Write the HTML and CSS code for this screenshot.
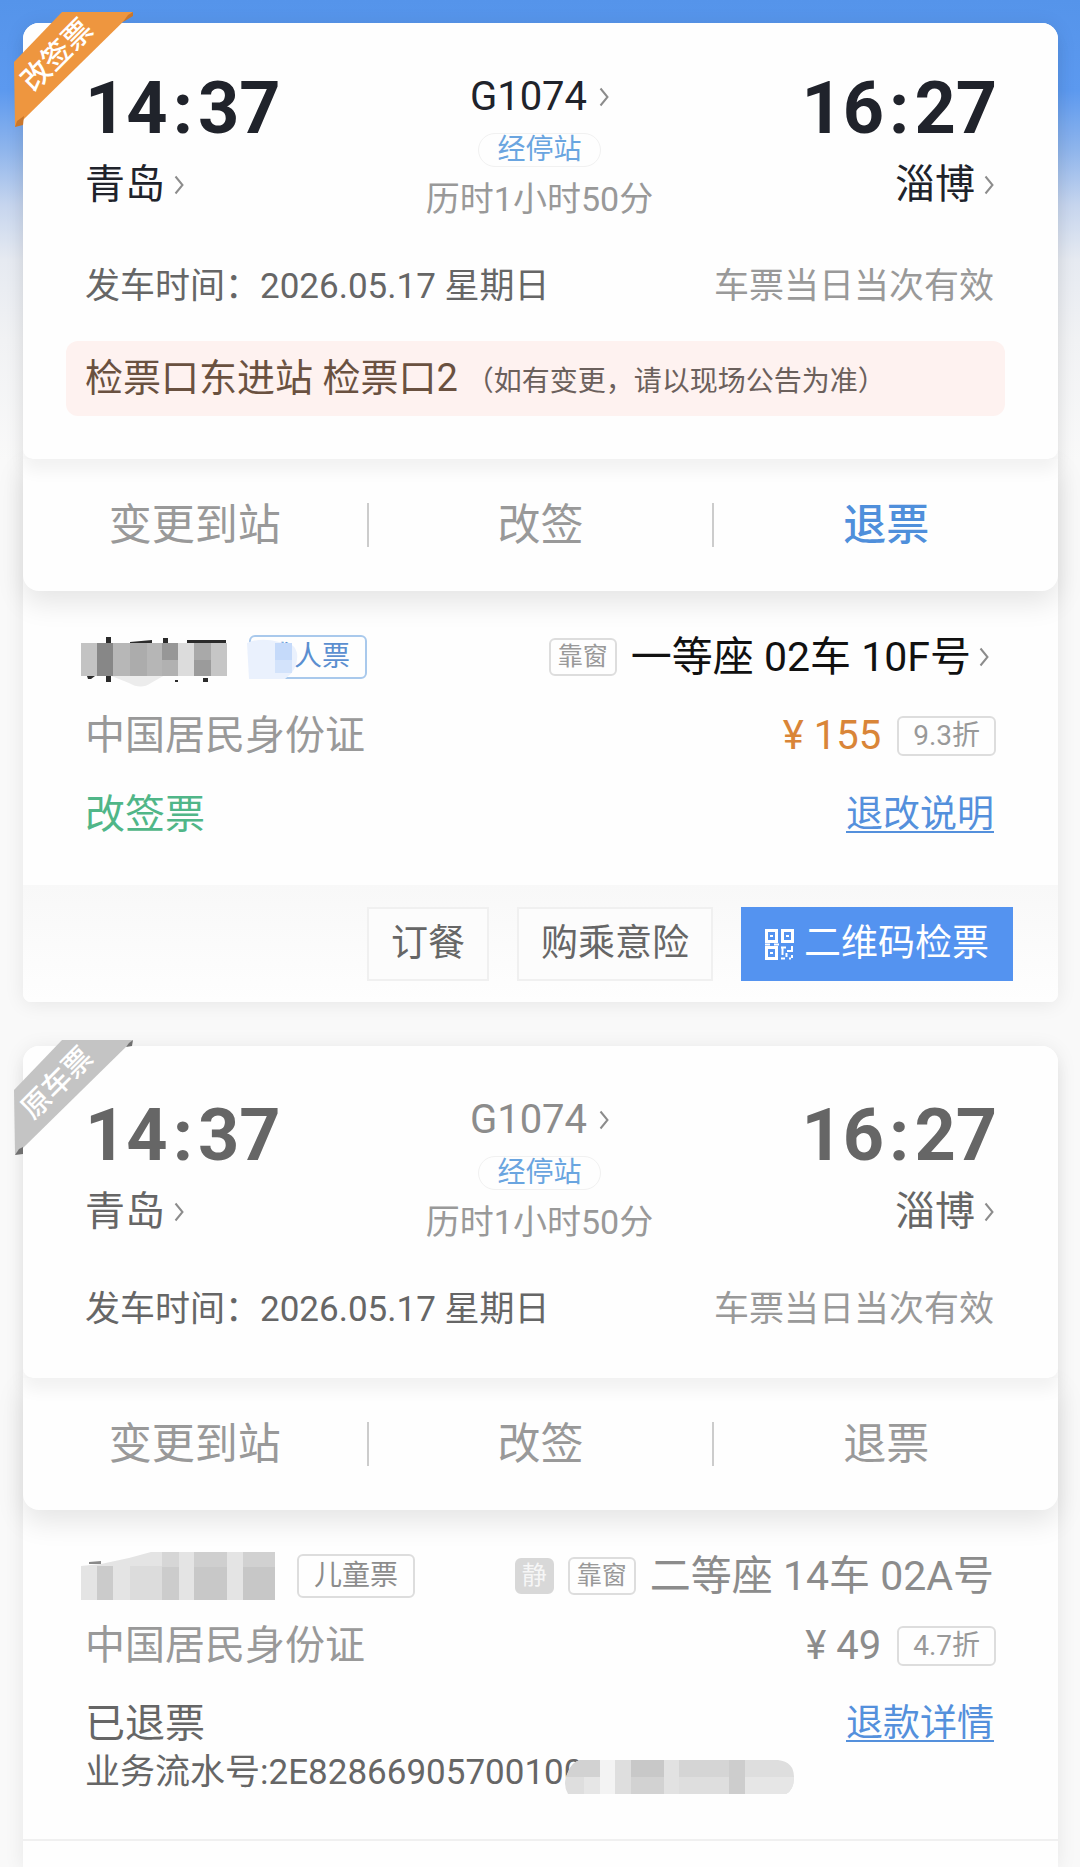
FILE: index.html
```html
<!DOCTYPE html>
<html lang="zh-CN">
<head>
    <meta charset="UTF-8">
    <meta name="viewport" content="width=device-width, initial-scale=1.0">
    <title>车票详情</title>
    <link rel="stylesheet" href="styles.css">
</head>
<body>
    <svg class="defs" aria-hidden="true">
        <symbol id="chevron" viewBox="0 0 10 20">
            <path d="M1.5 1.5 L8.5 10 L1.5 18.5" fill="none" stroke="currentColor" stroke-width="2"/>
        </symbol>
    </svg>

    <main class="page">
        <!-- Rebooked ticket -->
        <article class="card">
            <svg class="ribbon" viewBox="0 0 120 116">
                <polygon points="48,0 119,0 10,107 1,115 0,50" fill="#ee963f"/>
                <polygon points="119,0 119,4 109,10 114,3" fill="#c9772c"/>
                <polygon points="1,115 9,113 10,104 3,109" fill="#c9772c"/>
                <text class="ribbon-text" transform="translate(43 43) rotate(-45)" fill="#ffffff">改签票</text>
            </svg>

            <section class="trip">
                <div class="route">
                    <div class="stop">
                        <div class="time">14<span class="colon">:</span>37</div>
                        <button type="button" class="station">青岛<svg class="chevron"><use href="#chevron"/></svg></button>
                    </div>
                    <div class="train">
                        <button type="button" class="train-no">G1074<svg class="chevron"><use href="#chevron"/></svg></button>
                        <button type="button" class="stops-btn">经停站</button>
                        <div class="duration">历时1小时50分</div>
                    </div>
                    <div class="stop stop-end">
                        <div class="time">16<span class="colon">:</span>27</div>
                        <button type="button" class="station">淄博<svg class="chevron"><use href="#chevron"/></svg></button>
                    </div>
                </div>
                <div class="depart">
                    <span class="depart-date">发车时间：2026.05.17 星期日</span>
                    <span class="depart-valid">车票当日当次有效</span>
                </div>
                <p class="notice">检票口东进站 检票口2<small>（如有变更，请以现场公告为准）</small></p>
            </section>

            <nav class="actions">
                <button type="button" class="action">变更到站</button>
                <button type="button" class="action">改签</button>
                <button type="button" class="action action-on">退票</button>
            </nav>

            <section class="passenger">
                <div class="row">
                    <div class="who">
                        <svg class="mosaic mosaic-name" width="146" height="40" viewBox="0 0 146 40">
                            <path d="M28 38 H84 L70 46 Q60 53 48 46 Z" fill="#ececec"/>
                            <path d="M25 0h5v6h-5z M49 5l22-2v3H49z M82 1h5v5h-5z M106 3h39v3h-39z M6 39h8l-4 3h-3z M25 39h5v6h-5z M122 41h5v4h-5z M94 43h3v2h-3z" fill="#2b2b2b"/>
                            <rect x="0" y="6" width="16" height="33" fill="#c3c3c3"/>
                            <rect x="16" y="6" width="16" height="33" fill="#878787"/>
                            <rect x="32" y="6" width="17" height="33" fill="#b7b7b7"/>
                            <rect x="49" y="6" width="17" height="33" fill="#acacac"/>
                            <rect x="66" y="6" width="15" height="33" fill="#b6b6b6"/>
                            <rect x="81" y="6" width="16" height="17" fill="#979797"/>
                            <rect x="81" y="23" width="16" height="16" fill="#b1b1b1"/>
                            <rect x="97" y="6" width="16" height="33" fill="#dcdcdc"/>
                            <rect x="113" y="6" width="17" height="17" fill="#a9a9a9"/>
                            <rect x="130" y="6" width="16" height="33" fill="#c6c6c6"/>
                            <rect x="113" y="23" width="17" height="16" fill="#9b9b9b"/>
                        </svg>
                        <span class="tag tag-type tag-blue">成人票
                            <svg class="mosaic mosaic-type" width="50" height="46" viewBox="0 0 50 46">
                                <path d="M0 10 Q14 4 32 9 L42 11 Q48 12 50 20 Q52 36 38 46 L2 46 Z" fill="#eaf1fd"/>
                                <rect x="28" y="10" width="17" height="17" fill="#c5dafa"/>
                                <rect x="28" y="27" width="17" height="13" fill="#d3e3fb"/>
                            </svg>
                        </span>
                    </div>
                    <button type="button" class="seat">
                        <span class="tag tag-seat">靠窗</span>
                        <span>一等座 02车 10F号</span>
                        <svg class="chevron chevron-seat"><use href="#chevron"/></svg>
                    </button>
                </div>
                <div class="row">
                    <span class="id-type">中国居民身份证</span>
                    <div class="fare">
                        <span class="price">¥ 155</span>
                        <span class="tag tag-off">9.3折</span>
                    </div>
                </div>
                <div class="row">
                    <span class="status status-changed">改签票</span>
                    <a class="link" href="#">退改说明</a>
                </div>
            </section>

            <footer class="services">
                <button type="button" class="service">订餐</button>
                <button type="button" class="service">购乘意险</button>
                <button type="button" class="service service-qr">
                    <svg class="qr" width="29" height="31" viewBox="0 0 29 31" fill="none" stroke="#ffffff" stroke-width="3">
                        <rect x="1.5" y="1.5" width="10" height="11"/>
                        <rect x="17.5" y="1.5" width="10" height="11"/>
                        <rect x="1.5" y="18.5" width="10" height="11"/>
                        <path d="M5 7h3 M21 7h3 M5 24h3" stroke-width="2"/>
                        <path d="M16 18.5h5 M17.5 18v8 M22 22h4 M27 17v6 M21.5 24v4 M16 29.5h4 M24 29.5h2 M27 26v3 M0 15.5h5 M9 15.5h5"  stroke-width="2"/>
                    </svg>
                    二维码检票
                </button>
            </footer>
        </article>

        <!-- Original ticket, refunded -->
        <article class="card card-old">
            <svg class="ribbon" viewBox="0 0 120 116">
                <polygon points="48,0 119,0 10,107 1,115 0,50" fill="#c4c4c4"/>
                <polygon points="119,0 118,6 112,7 115,3" fill="#6f6f6f"/>
                <polygon points="1,115 9,114 9,107 5,109" fill="#6f6f6f"/>
                <text class="ribbon-text" transform="translate(43 43) rotate(-45)" fill="#ffffff">原车票</text>
            </svg>

            <section class="trip">
                <div class="route">
                    <div class="stop">
                        <div class="time">14<span class="colon">:</span>37</div>
                        <button type="button" class="station">青岛<svg class="chevron"><use href="#chevron"/></svg></button>
                    </div>
                    <div class="train">
                        <button type="button" class="train-no">G1074<svg class="chevron"><use href="#chevron"/></svg></button>
                        <button type="button" class="stops-btn">经停站</button>
                        <div class="duration">历时1小时50分</div>
                    </div>
                    <div class="stop stop-end">
                        <div class="time">16<span class="colon">:</span>27</div>
                        <button type="button" class="station">淄博<svg class="chevron"><use href="#chevron"/></svg></button>
                    </div>
                </div>
                <div class="depart">
                    <span class="depart-date">发车时间：2026.05.17 星期日</span>
                    <span class="depart-valid">车票当日当次有效</span>
                </div>
            </section>

            <nav class="actions">
                <button type="button" class="action">变更到站</button>
                <button type="button" class="action">改签</button>
                <button type="button" class="action">退票</button>
            </nav>

            <section class="passenger">
                <div class="row">
                    <div class="who">
                        <svg class="mosaic mosaic-name" width="194" height="48" viewBox="0 0 194 48">
                            <path d="M8 10l12-1v3H8z" fill="#8a8a8a"/>
                            <path d="M0 14 L20 12 L48 6 L70 0 H194 V48 H0 Z" fill="#e4e4e4"/>
                            <rect x="16" y="14" width="16" height="34" fill="#cbcbcb"/>
                            <rect x="49" y="14" width="32" height="34" fill="#dcdcdc"/>
                            <rect x="81" y="0" width="17" height="15" fill="#d6d6d6"/>
                            <rect x="81" y="15" width="17" height="33" fill="#cccccc"/>
                            <rect x="113" y="0" width="33" height="15" fill="#cfcfcf"/>
                            <rect x="113" y="15" width="33" height="33" fill="#c8c8c8"/>
                            <rect x="162" y="0" width="32" height="15" fill="#d1d1d1"/>
                            <rect x="162" y="15" width="32" height="33" fill="#c7c7c7"/>
                        </svg>
                        <span class="tag tag-type">儿童票</span>
                    </div>
                    <button type="button" class="seat">
                        <span class="tag tag-quiet">静</span>
                        <span class="tag tag-seat">靠窗</span>
                        <span>二等座 14车 02A号</span>
                    </button>
                </div>
                <div class="row">
                    <span class="id-type">中国居民身份证</span>
                    <div class="fare">
                        <span class="price">¥ 49</span>
                        <span class="tag tag-off">4.7折</span>
                    </div>
                </div>
                <div class="record">
                    <div class="row">
                        <span class="status">已退票</span>
                        <a class="link" href="#">退款详情</a>
                    </div>
                    <div class="serial">
                        业务流水号:2E82866905700100
                        <svg class="mosaic mosaic-serial" width="230" height="34" viewBox="0 0 230 34">
                            <clipPath id="pill"><path d="M16 0 H214 Q230 2 230 17 Q230 30 222 34 H4 Q-2 24 4 12 Q8 2 16 0Z"/></clipPath>
                            <g clip-path="url(#pill)">
                                <rect width="230" height="34" fill="#dedede"/>
                                <rect width="36" height="17" fill="#d2d2d2"/>
                                <rect x="20" y="17" width="16" height="17" fill="#e6e6e6"/>
                                <rect x="36" width="15" height="34" fill="#f3f3f3"/>
                                <rect x="67" width="33" height="17" fill="#c8c8c8"/>
                                <rect x="67" y="17" width="33" height="17" fill="#d2d2d2"/>
                                <rect x="100" width="15" height="34" fill="#e2e2e2"/>
                                <rect x="115" width="50" height="17" fill="#d5d5d5"/>
                                <rect x="165" width="16" height="34" fill="#cdcdcd"/>
                                <rect x="181" y="17" width="49" height="17" fill="#e6e6e6"/>
                            </g>
                        </svg>
                    </div>
                </div>
            </section>
        </article>
    </main>
</body>
</html>
```
FILE: styles.css
```css
* {
    box-sizing: border-box;
}
body {
    margin: 0;
    font-family: Roboto, "Noto Sans CJK SC", sans-serif;
    background: #f9f9f9;
    color: #666666;
    overflow-x: hidden;
}
button {
    padding: 0;
    border: none;
    background: none;
    color: inherit;
    font-family: inherit;
    cursor: pointer;
}
.defs {
    position: absolute;
    width: 0;
    height: 0;
}
.page {
    min-height: 100vh;
    padding: 23px 22px 0 23px;
    display: flex;
    flex-direction: column;
    gap: 44px;
    background: linear-gradient(#5594ea 0, #5c99ef 90px, #8fb5ec 150px, #c6d5ee 205px, #e6eaf1 260px, #f1f2f4 340px, #f9f9f9 460px);
}
.card {
    position: relative;
    background: #fefefe;
    border-radius: 16px 16px 8px 8px;
    box-shadow: 0 2px 20px rgba(0, 0, 0, 0.08);
}
.card-old {
    flex: 1;
    border-radius: 16px 16px 0 0;
}

/* Corner ribbon */
.ribbon {
    position: absolute;
    z-index: 3;
    left: -9px;
    top: -11px;
    width: 120px;
    height: 116px;
}
.card-old .ribbon {
    top: -6px;
}
.ribbon-text {
    font-size: 29px;
    font-weight: 500;
    text-anchor: middle;
    dominant-baseline: central;
}

/* Times and stations */
.trip {
    position: relative;
    z-index: 2;
    padding: 50px 64px 43px 62px;
    background: #fefefe;
    border-radius: 16px 16px 10px 10px;
    box-shadow: 0 12px 16px rgba(0, 0, 0, 0.05);
}
.card-old .trip {
    padding-bottom: 48px;
}
.route {
    display: flex;
    justify-content: space-between;
    color: #20232b;
}
.card-old .route {
    color: #666666;
}
.stop,
.train {
    flex: 1;
    display: flex;
    flex-direction: column;
    align-items: flex-start;
}
.card-old .stop {
    padding-top: 4px;
}
.stop-end {
    align-items: flex-end;
}
.train {
    align-items: center;
}
.time {
    font-size: 72px;
    line-height: 72px;
    font-weight: 700;
}
.stop-end .time {
    margin-right: -3px;
}
.colon {
    margin: 0 5px;
}
.station,
.train-no {
    display: flex;
    align-items: center;
    gap: 12px;
    font-size: 40px;
    line-height: 48px;
}
.station {
    gap: 9px;
    margin-top: 16px;
}
.card-old .train-no {
    color: #8c8c8c;
}
.chevron {
    width: 10px;
    height: 20px;
    color: #8c8c8c;
}
.stops-btn {
    height: 34px;
    margin-top: 12px;
    padding: 0 18px;
    border: 1px solid #f1f1f1;
    border-radius: 17px;
    color: #6aa5e0;
    font-size: 28px;
    line-height: 32px;
}
.duration {
    margin-top: 12px;
    color: #999999;
    font-size: 34px;
    line-height: 40px;
}
.depart {
    display: flex;
    justify-content: space-between;
    margin-top: 48px;
    font-size: 35px;
    line-height: 40px;
}
.depart-valid {
    color: #999999;
}
.notice {
    margin: 34px -11px 0 -19px;
    padding: 0 19px;
    border-radius: 12px;
    background: #fef2f0;
    color: #6a5140;
    font-size: 38px;
    line-height: 75px;
}
.notice small {
    margin-left: 8px;
    color: #6b605c;
    font-size: 28px;
    line-height: 28px;
}

/* Change / rebook / refund */
.actions {
    position: relative;
    z-index: 1;
    display: flex;
    padding: 44px 0;
    background: #fefefe;
    border-radius: 0 0 16px 16px;
    box-shadow: 0 12px 28px rgba(0, 0, 0, 0.1);
}
.action {
    flex: 1;
    color: #999999;
    font-size: 43px;
    line-height: 44px;
}
.action + .action {
    border-left: 2px solid #cccccc;
}
.action-on {
    color: #4f8fdb;
    font-weight: 500;
}

/* Passenger */
.passenger {
    display: flex;
    flex-direction: column;
    gap: 39px;
    padding: 46px 64px 50px 62px;
}
.card-old .passenger {
    gap: 30px;
    padding-bottom: 46px;
    border-bottom: 2px solid #f0f0f0;
}
.row {
    display: flex;
    justify-content: space-between;
    align-items: center;
    height: 40px;
    line-height: 40px;
}
.who,
.seat,
.fare {
    display: flex;
    align-items: center;
}
.who {
    gap: 22px;
}
.seat {
    gap: 14px;
    color: #111111;
    font-size: 41px;
    line-height: 40px;
}
.card-old .seat {
    color: #8c8c8c;
}
.chevron-seat {
    margin: 0 5px 0 -6px;
}
.fare {
    gap: 16px;
    margin-right: -2px;
}
.mosaic {
    display: block;
    overflow: visible;
}
.mosaic-name {
    margin-left: -4px;
}
.mosaic-type,
.mosaic-serial {
    position: absolute;
}
.mosaic-type {
    left: -4px;
    top: -4px;
}
.mosaic-serial {
    left: 479px;
    top: 7px;
}
.tag {
    position: relative;
    border: 2px solid #dddddd;
    border-radius: 6px;
    color: #999999;
    font-size: 28px;
    text-align: center;
    white-space: nowrap;
}
.tag-type {
    padding: 0 15px;
    color: #8c8c8c;
    line-height: 40px;
}
.tag-blue {
    border-color: #a9c9ec;
    color: #5b8fd0;
}
.tag-seat {
    padding: 0 7px;
    font-size: 25px;
    line-height: 34px;
}
.tag-quiet {
    padding: 0 5px;
    border-color: #d8d8d8;
    background: #d8d8d8;
    color: #f6f6f6;
    font-size: 25px;
    line-height: 32px;
}
.tag-off {
    padding: 0 14px;
    line-height: 36px;
}
.id-type {
    color: #999999;
    font-size: 40px;
}
.price {
    color: #d98538;
    font-size: 40px;
}
.card-old .price {
    color: #8c8c8c;
}
.status {
    font-size: 40px;
}
.status-changed {
    color: #50b688;
}
.link {
    color: #5490dc;
    font-size: 37px;
    text-decoration: underline;
    text-decoration-thickness: 2px;
    text-underline-offset: 4px;
}
.record {
    display: flex;
    flex-direction: column;
    gap: 9px;
    padding-top: 8px;
}
.serial {
    position: relative;
    font-size: 35px;
    line-height: 40px;
}

/* Service buttons */
.services {
    display: flex;
    justify-content: flex-end;
    gap: 28px;
    padding: 22px 45px 21px;
    background: linear-gradient(#f8f8f8, #fefefe);
    border-radius: 0 0 8px 8px;
}
.service {
    display: flex;
    align-items: center;
    gap: 10px;
    height: 74px;
    padding: 0 22px;
    border: 2px solid #f0f0f0;
    background: #fcfcfc;
    font-size: 37px;
    line-height: 40px;
}
.service-qr {
    border-color: #5493f0;
    background: #5493f0;
    color: #ffffff;
}
```
